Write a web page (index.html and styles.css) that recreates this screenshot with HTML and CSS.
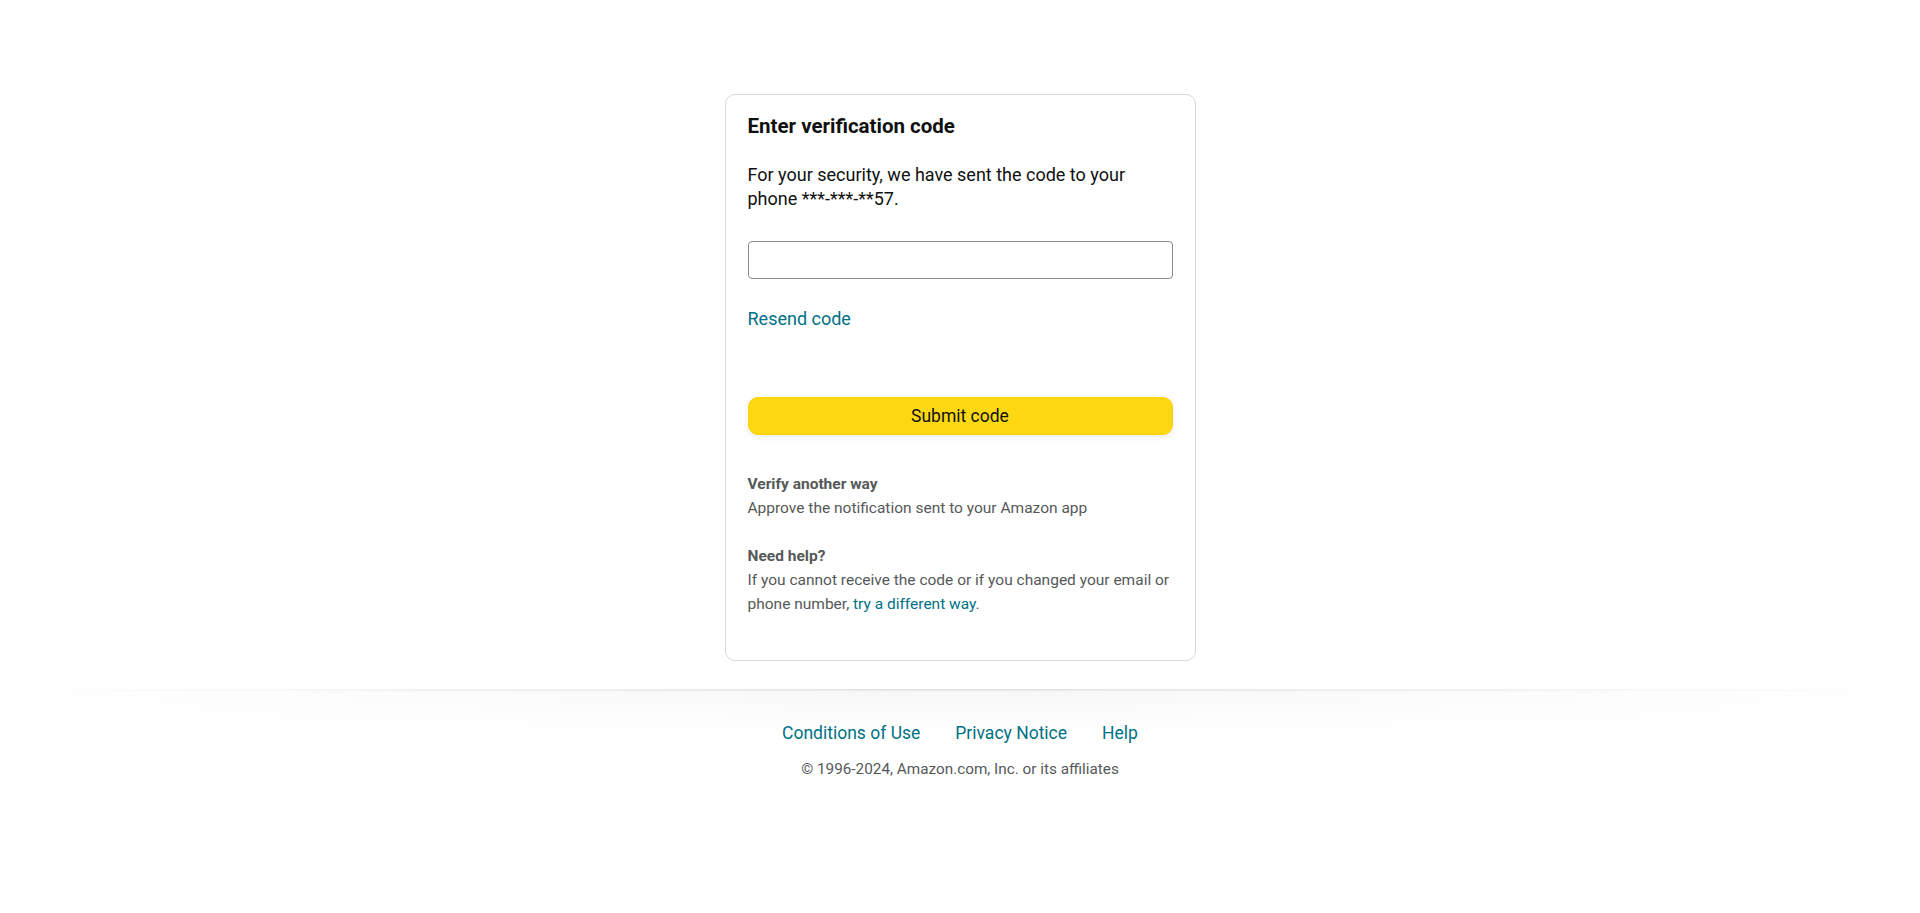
FILE: index.html
```html
<!DOCTYPE html>
<html lang="en">
<head>
<meta charset="utf-8">
<title>Amazon Authentication</title>
<link rel="stylesheet" href="styles.css">
</head>
<body>
<div class="page">
  <main class="main">
    <section class="card">
      <h1 class="title">Enter verification code</h1>
      <p class="lead">For your security, we have sent the code to your phone ***-***-**57.</p>
      <input class="code-input" type="text" aria-label="Enter OTP">
      <a class="link resend" href="#">Resend code</a>
      <button class="submit" type="button">Submit code</button>
      <div class="info">
        <div class="info-title">Verify another way</div>
        <div class="info-text">Approve the notification sent to your Amazon app</div>
      </div>
      <div class="info help">
        <div class="info-title">Need help?</div>
        <div class="info-text">If you cannot receive the code or if you changed your email or phone number, <a class="link" href="#">try a different way</a>.</div>
      </div>
    </section>
  </main>
  <footer class="footer">
    <div class="divider"></div>
    <nav class="footer-links">
      <a class="link" href="#">Conditions of Use</a>
      <a class="link" href="#">Privacy Notice</a>
      <a class="link" href="#">Help</a>
    </nav>
    <div class="copyright">© 1996-2024, Amazon.com, Inc. or its affiliates</div>
  </footer>
</div>
</body>
</html>
```
FILE: styles.css
```css
html, body {
  margin: 0;
  padding: 0;
  background: #fff;
}
body {
  font-family: Roboto, "Liberation Sans", Arial, sans-serif;
  color: #0f1111;
}
.page {
  display: flex;
  flex-direction: column;
  align-items: center;
}
.main {
  padding-top: 94px;
  display: flex;
  justify-content: center;
}
.card {
  box-sizing: border-box;
  width: 471px;
  border: 1px solid #d5d9d9;
  border-radius: 10px;
  padding: 19px 22px 44px 22px;
  display: flex;
  flex-direction: column;
  align-items: flex-start;
}
.title {
  margin: 0 0 24px 0;
  font-size: 20.5px;
  line-height: 25px;
  font-weight: 700;
  color: #0f1111;
}
.lead {
  margin: 0 0 30px 0;
  font-size: 18px;
  line-height: 24px;
  color: #0f1111;
}
.code-input {
  box-sizing: border-box;
  width: 100%;
  height: 38px;
  margin: 0 0 28px 0;
  border: 1px solid #888c8c;
  border-radius: 4px;
  box-shadow: none;
  padding: 4px 9px;
  font-family: inherit;
  font-size: 18px;
  outline: none;
  background: #fff;
}
.link {
  color: #007185;
  text-decoration: none;
}
.resend {
  font-size: 18px;
  line-height: 24px;
  margin-bottom: 66px;
}
.submit {
  box-sizing: border-box;
  width: 100%;
  height: 38px;
  margin: 0 0 37px 0;
  background: #ffd814;
  border: 1px solid #fcd200;
  border-radius: 10px;
  box-shadow: 0 2px 5px 0 rgba(213, 217, 217, 0.5);
  font-family: inherit;
  font-size: 17.5px;
  color: #0f1111;
  display: flex;
  align-items: center;
  justify-content: center;
  padding: 0;
  cursor: pointer;
}
.info {
  font-size: 15.5px;
  line-height: 24px;
  color: #565959;
}
.info-title {
  font-weight: 700;
}
.help {
  margin-top: 24px;
}
.footer {
  width: 100%;
  margin-top: 28px;
  display: flex;
  flex-direction: column;
  align-items: center;
}
.divider {
  width: 100%;
  height: 44px;
  margin-bottom: -12px;
  background: linear-gradient(to bottom, rgba(0, 0, 0, 0.14), rgba(0, 0, 0, 0.03) 3px, transparent);
  position: relative;
}
.divider::after {
  content: "";
  position: absolute;
  inset: 0;
  background: linear-gradient(to right, #fff, rgba(255, 255, 255, 0), #fff);
}
.footer-links {
  display: flex;
  gap: 35px;
  font-size: 17.5px;
  line-height: 24px;
  position: relative;
}
.copyright {
  margin-top: 14px;
  font-size: 15.3px;
  line-height: 20px;
  color: #565959;
}
```
